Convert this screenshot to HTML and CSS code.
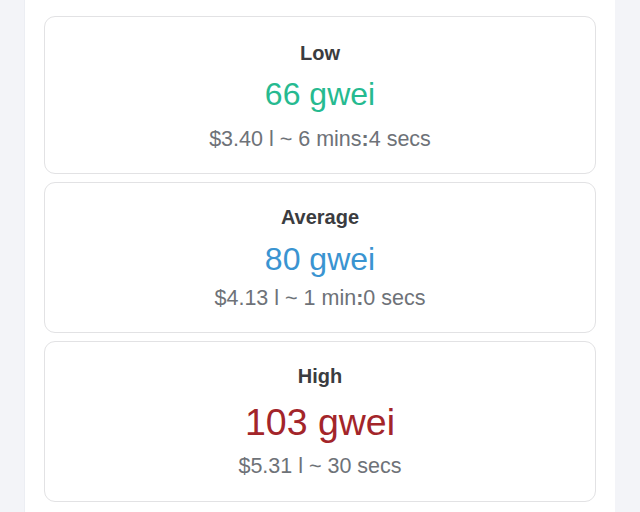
FILE: index.html
```html
<!DOCTYPE html>
<html lang="en">
<head>
<meta charset="utf-8">
<title>Gas prices</title>
<link rel="stylesheet" href="styles.css">
</head>
<body>
<main class="panel">
  <section class="card card--low">
    <h2 class="card__title">Low</h2>
    <div class="card__value card__value--low">66 gwei</div>
    <div class="card__meta">$3.40 l ~ 6 mins<b>:</b>4 secs</div>
  </section>
  <section class="card card--avg">
    <h2 class="card__title">Average</h2>
    <div class="card__value card__value--avg">80 gwei</div>
    <div class="card__meta">$4.13 l ~ 1 min<b>:</b>0 secs</div>
  </section>
  <section class="card card--high">
    <h2 class="card__title">High</h2>
    <div class="card__value card__value--high">103 gwei</div>
    <div class="card__meta">$5.31 l ~ 30 secs</div>
  </section>
</main>
</body>
</html>
```
FILE: styles.css
```css
html, body {
  margin: 0;
  padding: 0;
  background: #f3f4f8;
  font-family: "Liberation Sans", Arial, sans-serif;
}

.panel {
  margin: 0 25px 0 24px;
  min-height: 520px;
  background: #ffffff;
  border-left: 1px solid #eceef3;
  padding: 16px 19px 0 19px;
  display: flex;
  flex-direction: column;
  gap: 8px;
}

.card {
  border: 1px solid #e2e2e4;
  border-radius: 11px;
  text-align: center;
  display: flex;
  flex-direction: column;
  padding: 22px 0 21px;
}

.card__title {
  margin: 0;
  font-size: 20px;
  line-height: 24px;
  font-weight: 700;
  color: #3b3c40;
}

.card__value {
  font-size: 32px;
  line-height: 38px;
  margin-top: 11px;
}

.card__value--low { color: #26ba90; }
.card__value--avg { color: #3a94d1; }
.card__value--high {
  color: #a3252a;
  font-size: 37.5px;
  line-height: 44px;
  margin-top: 12px;
}

.card__meta {
  font-size: 21.5px;
  line-height: 26px;
  color: #6e7278;
  margin-top: 9.5px;
}

.card__meta b {
  font-weight: 700;
}

.card--low {
  padding-top: 24px;
  padding-bottom: 21.5px;
}
.card--low .card__value { margin-top: 10px; }
.card--low .card__meta { margin-top: 12.5px; }

.card--avg {
  padding-bottom: 20.5px;
}
.card--avg .card__value { margin-top: 11.4px; }
.card--avg .card__meta { margin-top: 7px; }

.card--high {
  padding-bottom: 21.5px;
}
```
